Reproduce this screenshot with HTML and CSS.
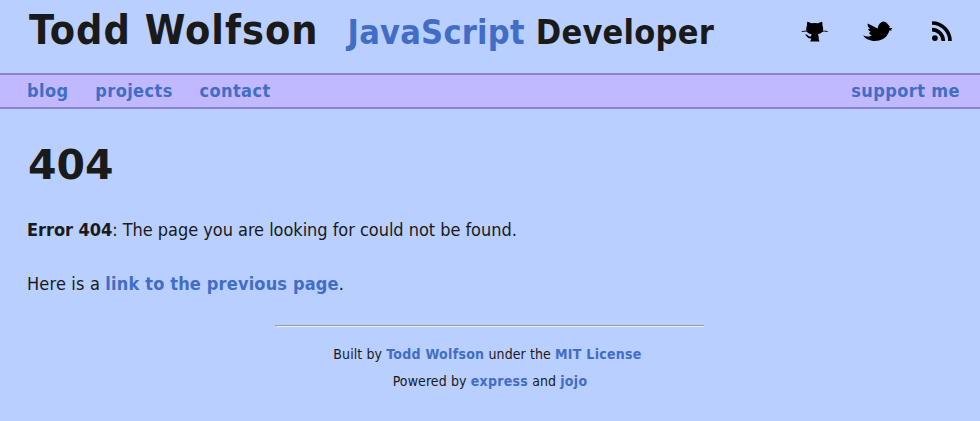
FILE: index.html
```html
<!DOCTYPE html>
<html lang="en"><head><meta charset="utf-8"><title>404 - Todd Wolfson</title><link rel="stylesheet" href="styles.css"></head>
<body>
<header class="header">
<h1 class="name">Todd Wolfson</h1>
<p class="role"><span class="accent">JavaScript</span> Developer</p>
<div class="social">
<svg class="github" width="28" height="24" viewBox="0 0 28 24"><path d="M6.300 1.700Q8 1.700 10.300 3.200Q13.500 2.600 17 3.200Q19.300 1.700 21 1.700Q21.800 3.200 21.400 5.200Q23 9.500 21.300 12Q19.500 14 16.800 14.200Q18 15.500 17.800 19.500L18.500 21.500H9.300L10.200 18.500Q7 18.800 6 16.800L4 14.500Q6 14 7.200 15.800Q8 17 10 16.300Q10 15 10.600 14.200Q7.500 14 6 12Q4.300 9.500 6 5.200Q5.500 3.200 6.300 1.700z"/><path d="M.8 11.600Q4 10.800 7 11.300M20.500 11.300Q24 10.800 26.700 11.600" stroke="#000" stroke-width=".9" fill="none"/></svg>
<svg class="twitter" width="30" height="24" viewBox="0 0 30 24"><path d="M0 15.200Q5 17.500 9 15.500Q6 14.500 6.300 12.500L8 12Q4.800 10.500 5.300 8.800L7 9Q4 6 4.800 3.500Q9 5.500 14.500 8.500Q15.500 4 18 2.500Q22 0 25 4.500L26.800 6.500L26.200 8H29.500L28 9.500L29 10.500H26.500Q24.500 16.500 20 19Q14 22 8 20.500Q3 19.500 0 15.200z"/></svg>
<svg class="rss" width="20" height="20" viewBox="0 0 20 20"><circle cx="2.900" cy="17.100" r="2.900"/><path d="M0 8.700A11.300 11.300 0 0 1 11.300 20M0 2A18 18 0 0 1 18 20" fill="none" stroke="#000" stroke-width="3.700"/></svg>
</div>
</header>
<nav class="nav"><a href="#">blog</a><a href="#">projects</a><a href="#">contact</a><a href="#" class="support">support me</a></nav>
<main class="main"><h2>404</h2><p><b>Error 404</b>: The page you are looking for could not be found.</p><p class="back">Here is a <a href="#">link to the previous page</a>.</p></main>
<footer class="footer"><hr><p class="built">Built by <a href="#">Todd Wolfson</a> under the <a href="#">MIT License</a></p><p>Powered by <a href="#">express</a> and <a href="#">jojo</a></p></footer>
</body></html>
```
FILE: styles.css
```css
body{margin:0;background:#b9cfff;color:#1a1a1a;font:18px/27px "DejaVu Sans Condensed","DejaVu Sans",sans-serif}
a,.accent{color:#426dc6}
a{font-weight:bold;text-decoration:none}
h1,h2,p{margin:0}
.header{display:flex;height:73px;padding-left:29px}
.name{font-size:41px;line-height:60px;letter-spacing:1px}
.role{font-size:34px;line-height:64px;font-weight:bold;margin-left:29px;letter-spacing:.25px}
.social{display:flex;margin:20px 28px 0 auto}
.twitter{margin-left:34px}
.rss{margin:1px 0 0 39px}
.nav{display:flex;box-sizing:border-box;height:36px;gap:26.800px;padding:2px 20px 0 27px;background:#c0b9ff;border:solid #8a80d4;border-width:2px 0;letter-spacing:.4px}
.support{margin-left:auto}
.main{padding:28px 27px 0}
.main h2{font-family:"DejaVu Sans",sans-serif;font-size:41px;line-height:56px;margin:0 0 23px 1px}
.main p{margin-bottom:27px;letter-spacing:-.04px}
.main .back{letter-spacing:.17px}
.footer{text-align:center;font-size:14px;letter-spacing:.1px}
.footer a{letter-spacing:.28px}
.footer hr{box-sizing:border-box;width:429px;height:2px;margin:28px auto 14px;position:relative;left:-1px;border:solid;border-width:1px 0 1px 1px;border-color:#9a9a9a #eee #eee #9a9a9a}
.footer .built{padding-right:5px}
```
